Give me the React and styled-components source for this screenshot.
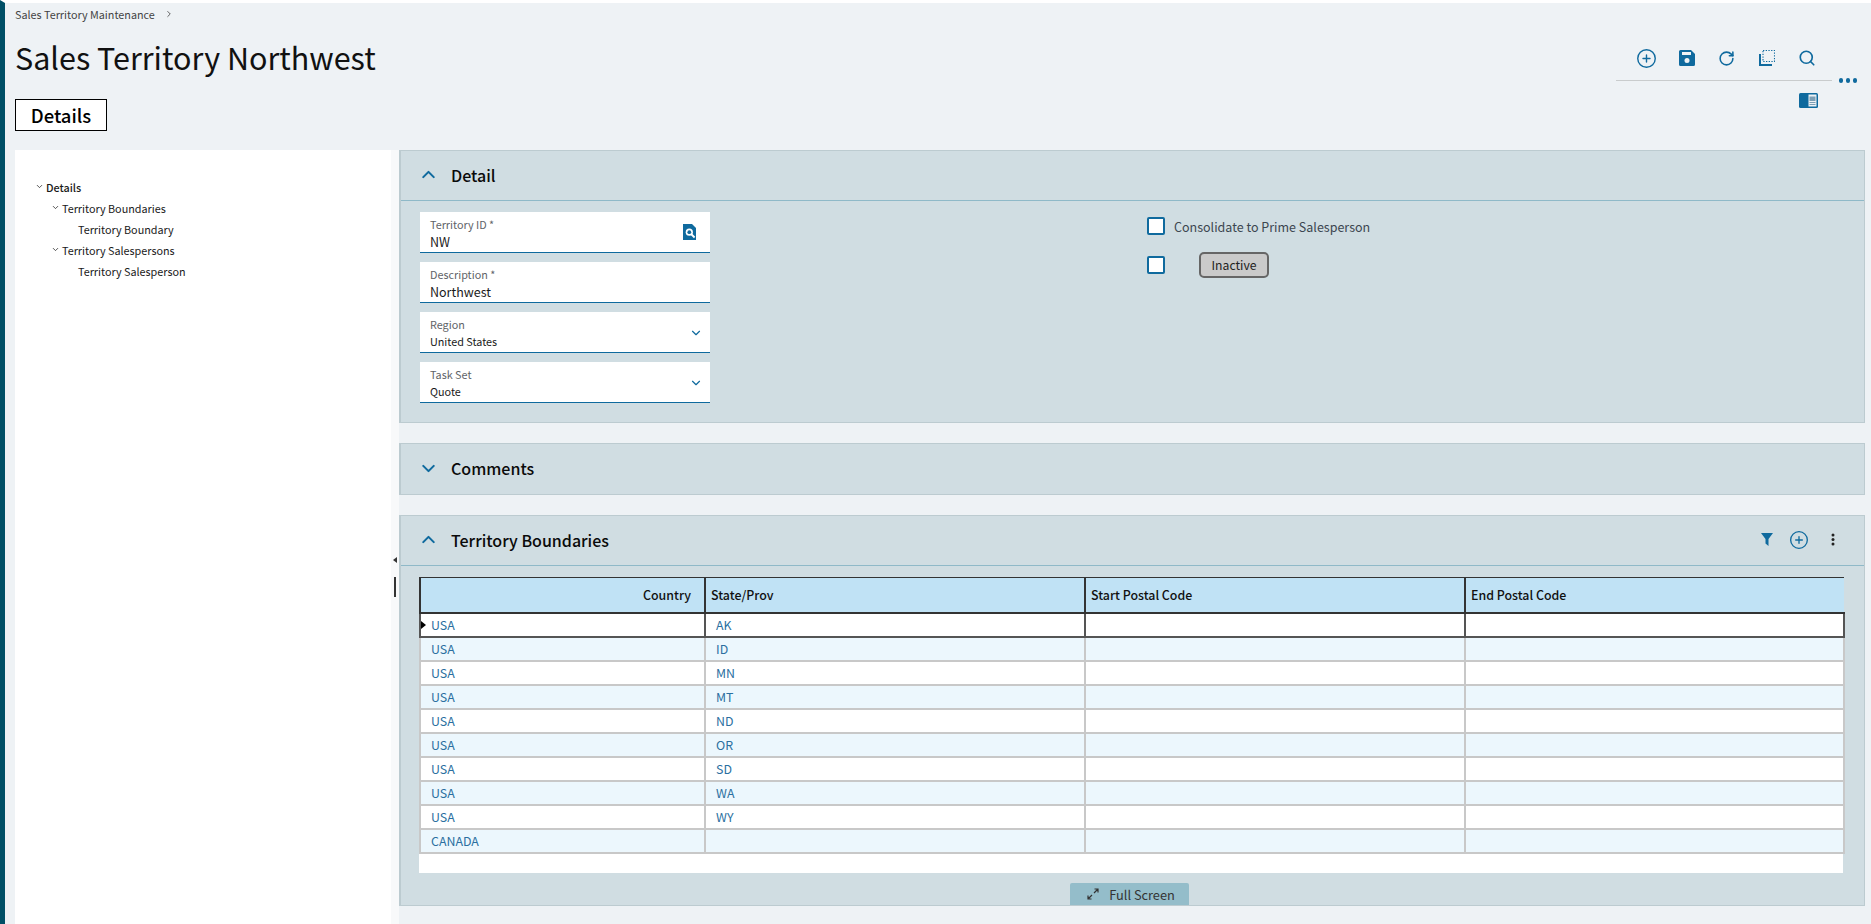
import React from "react";
import styled, { createGlobalStyle } from "styled-components";
import { ChevronDown, ChevronUp, ChevronRight, CirclePlus, RotateCw, Search } from "lucide-react";

const Global = createGlobalStyle`
  html, body { margin: 0; padding: 0; height: 100%; }
  body {
    background: #eef2f5;
    font-family: "Noto Sans CJK SC", "Open Sans", sans-serif;
    color: #000;
    overflow: hidden;
  }
`;

const BLUE = "#0f6a9e";

const Page = styled.div`
  width: 1871px;
  height: 924px;
  box-sizing: border-box;
  border-top: 3px solid #fff;
  border-left: 5px solid #004f66;
  display: flex;
  flex-direction: column;
  overflow: hidden;
`;
const Header = styled.header`
  height: 147px;
  flex: none;
  display: flex;
  justify-content: space-between;
  padding-left: 10px;
`;
const TitleBlock = styled.div`
  display: flex;
  flex-direction: column;
  align-items: flex-start;
`;
const Breadcrumb = styled.div`
  display: flex;
  align-items: center;
  gap: 9px;
  height: 22px;
  font-size: 10.8px;
  line-height: 22px;
  color: #444;
`;
const Title = styled.h1`
  margin: 10px 0 0;
  font-size: 30.5px;
  line-height: 44px;
  font-weight: 400;
  color: #111;
`;
const TabButton = styled.div`
  margin-top: 20px;
  width: 90px;
  height: 30px;
  border: 1px solid #000;
  background: #fff;
  font-size: 18.5px;
  font-weight: 500;
  line-height: 30px;
  text-align: center;
`;
const ActionsArea = styled.div`
  display: flex;
  align-items: flex-start;
  padding-top: 44px;
  padding-right: 14px;
`;
const ToolColumn = styled.div`
  display: flex;
  flex-direction: column;
  align-items: flex-end;
  width: 216px;
`;
const Toolbar = styled.div`
  width: 100%;
  height: 34px;
  box-sizing: border-box;
  border-bottom: 1px solid #c9cccd;
  display: flex;
  align-items: flex-start;
  justify-content: flex-end;
  gap: 18px;
  padding-right: 14px;
`;
const ToolIcon = styled.span`
  width: 22px;
  height: 22px;
  display: flex;
  align-items: center;
  justify-content: center;
  color: ${BLUE};
`;
const SideIcon = styled.span`
  display: flex;
  margin: 12px 14px 0 0;
`;
const MoreDots = styled.div`
  display: flex;
  gap: 2.5px;
  margin: 31px 0 0 7px;
  span {
    width: 4.5px;
    height: 4.5px;
    border-radius: 50%;
    background: ${BLUE};
  }
`;
const Body = styled.div`
  flex: 1;
  display: flex;
  padding-left: 10px;
  min-height: 0;
`;
const TreePanel = styled.nav`
  width: 376px;
  flex: none;
  background: #fff;
  padding-top: 26px;
  box-sizing: border-box;
`;
const TreeRow = styled.div`
  display: flex;
  align-items: center;
  height: 21px;
  padding-left: ${(p) => p.$indent}px;
  gap: 2px;
  font-size: 10.8px;
  font-weight: ${(p) => (p.$strong ? 500 : 400)};
  color: #1a1a1a;
  svg { color: #222; flex: none; }
`;
const Splitter = styled.div`
  width: 8px;
  flex: none;
  display: flex;
  flex-direction: column;
  align-items: center;
  padding-top: 407px;
  box-sizing: border-box;
  background: #f8f9fa;
`;
const SplitArrow = styled.span`
  width: 0;
  height: 0;
  border-top: 3px solid transparent;
  border-bottom: 3px solid transparent;
  border-right: 4px solid #333;
`;
const SplitBar = styled.span`
  width: 2px;
  height: 20px;
  margin-top: 14px;
  background: #333;
`;
const Main = styled.main`
  width: 1466px;
  flex: none;
  display: flex;
  flex-direction: column;
  gap: 20px;
`;
const Section = styled.section`
  background: #d0dde2;
  border: 1px solid #bccbd0;
  border-width: 1px 1px 1px 2px;
  box-sizing: border-box;
  height: ${(p) => p.$height}px;
  display: flex;
  flex-direction: column;
`;
const SectionHead = styled.div`
  height: 50px;
  flex: none;
  box-sizing: border-box;
  display: flex;
  align-items: center;
  padding: 0 29px 2px 17px;
  gap: 12px;
  font-size: 16px;
  font-weight: 500;
  color: #0a0a0a;
  border-bottom: ${(p) => (p.$open ? "1px solid #8fb9c8" : "none")};
  svg { color: ${BLUE}; flex: none; }
`;
const HeadActions = styled.div`
  margin-left: auto;
  display: flex;
  align-items: center;
  gap: 16px;
  svg:last-child { margin-left: 6px; }
`;
const DetailGrid = styled.div`
  display: flex;
  padding: 11px 0 0 19px;
`;
const FieldColumn = styled.div`
  width: 290px;
  display: flex;
  flex-direction: column;
  gap: 9px;
`;
const Field = styled.div`
  height: 41px;
  box-sizing: border-box;
  background: #fff;
  border-bottom: 1px solid ${BLUE};
  padding: 5px 10px 0;
  position: relative;
`;
const FieldLabel = styled.div`
  font-size: 10.8px;
  line-height: 15px;
  color: #5f6468;
`;
const FieldValue = styled.div`
  margin-top: 1px;
  font-size: ${(p) => (p.$small ? 10.8 : 12.5)}px;
  line-height: 17px;
  color: #1a1a1a;
`;
const FieldIcon = styled.span`
  position: absolute;
  right: ${(p) => (p.$chevron ? 7 : 14)}px;
  top: ${(p) => (p.$chevron ? 14 : 12)}px;
  display: flex;
  color: ${BLUE};
`;
const ChecksColumn = styled.div`
  margin-left: 437px;
  padding-top: 2px;
  display: flex;
  flex-direction: column;
  gap: 15px;
`;
const CheckRow = styled.div`
  display: flex;
  align-items: center;
  height: 24px;
  font-size: 12.5px;
  color: #3c4650;
`;
const CheckBox = styled.span`
  width: 18px;
  height: 18px;
  box-sizing: border-box;
  background: #fff;
  border: 2px solid ${BLUE};
  border-radius: 2px;
  margin-right: 9px;
`;
const InactiveBtn = styled.span`
  width: 70px;
  height: 26px;
  box-sizing: border-box;
  margin-left: 25px;
  background: #cacaca;
  border: 2px solid #666;
  border-radius: 5px;
  font-size: 12.2px;
  line-height: 22px;
  text-align: center;
  color: #222;
`;
const TableWrap = styled.div`
  margin: 11px 0 0 18px;
  width: 1424px;
  height: 298px;
  background: #fff;
  position: relative;
`;
const Grid = styled.table`
  width: 100%;
  table-layout: fixed;
  border-collapse: collapse;
  font-size: 12.4px;
`;
const HeadCell = styled.th`
  height: 34px;
  padding: 0 ${(p) => (p.$right ? 13 : 6)}px 0 5px;
  background: #c0e2f5;
  border: 1px solid #333;
  border-width: 1px 2px 2px;
  border-color: #333;
  border-right: ${(p) => (p.$last ? "none" : "2px solid #333")};
  font-weight: 500;
  font-size: 12.4px;
  text-align: ${(p) => (p.$right ? "right" : "left")};
  color: #111;
`;
const Row = styled.tr`
  background: ${(p) => (p.$odd ? "#ecf7fd" : "#fff")};
`;
const Cell = styled.td`
  height: 22px;
  padding: 0 0 0 10px;
  border: 2px solid ${(p) => (p.$active ? "#555" : "#c8c8c8")};
  color: #2b6fa0;
  position: relative;
`;
const RowMarker = styled.span`
  position: absolute;
  left: 0;
  top: 7px;
  width: 0;
  height: 0;
  border-top: 4px solid transparent;
  border-bottom: 4px solid transparent;
  border-left: 5px solid #000;
`;
const FullScreenBar = styled.div`
  margin-top: 10px;
  flex: 1;
  display: flex;
  justify-content: center;
  align-items: flex-end;
  padding-right: 6px;
`;
const FullScreenBtn = styled.div`
  width: 119px;
  height: 22px;
  padding-left: 3px;
  box-sizing: border-box;
  background: #94bdca;
  border-radius: 2px 2px 0 0;
  display: flex;
  align-items: center;
  justify-content: center;
  gap: 10px;
  font-size: 12.8px;
  color: #333;
`;

const SaveIcon = () => (
  <svg width="16" height="16" viewBox="0 0 16 16">
    <path d="M2 0h10l4 4v10.500a1.500 1.500 0 0 1-1.500 1.500h-13A1.500 1.500 0 0 1 0 14.500v-13A1.500 1.500 0 0 1 1.500 0z" fill={BLUE} />
    <rect x="3" y="2" width="9" height="3" fill="#eef2f5" />
    <circle cx="8" cy="10.500" r="2.500" fill="#eef2f5" />
  </svg>
);

const CopyDashIcon = () => (
  <svg width="16" height="16" viewBox="0 0 16 16" fill="none" stroke={BLUE}>
    <rect x="4" y="0.500" width="11.500" height="11" strokeWidth="1.100" strokeDasharray="1.300 1.400" />
    <path d="M1 4v11h12" strokeWidth="2" />
  </svg>
);

const PanelIcon = () => (
  <svg width="19" height="15" viewBox="0 0 19 15">
    <rect width="19" height="15" rx="1.500" fill={BLUE} />
    <rect x="9.500" y="1.500" width="8" height="12" fill="#eef2f5" />
    <rect x="10.500" y="3.500" width="6" height="4.500" fill="#7d9fb5" />
    <rect x="10.500" y="9" width="6" height="1" fill="#7d9fb5" />
    <rect x="10.500" y="11" width="6" height="1" fill="#7d9fb5" />
  </svg>
);

const LookupIcon = () => (
  <svg width="13" height="16" viewBox="0 0 13 16">
    <path d="M0 0h9l4 4v12H0z" fill={BLUE} />
    <circle cx="6.300" cy="8.200" r="3.600" fill="#fff" />
    <circle cx="6.300" cy="8.200" r="1.900" fill={BLUE} />
    <path d="M8.600 10.500l3 3" stroke="#fff" strokeWidth="1.800" />
  </svg>
);

const FilterIcon = () => (
  <svg width="12" height="13" viewBox="0 0 12 13">
    <path d="M0 0h12L7.500 6v7l-3-2.500V6z" fill={BLUE} />
  </svg>
);

const KebabIcon = () => (
  <svg width="4" height="13" viewBox="0 0 4 13">
    <circle cx="2" cy="2" r="1.500" fill="#222" />
    <circle cx="2" cy="6.500" r="1.500" fill="#222" />
    <circle cx="2" cy="11" r="1.500" fill="#222" />
  </svg>
);

const ExpandIcon = () => (
  <svg width="12" height="12" viewBox="0 0 12 12" fill="none" stroke="#333" strokeWidth="1.200">
    <path d="M7 5l4-4M7.500 1H11v3.500M5 7l-4 4M1 7.500V11h3.500" />
  </svg>
);

const rows = [
  ["USA", "AK"], ["USA", "ID"], ["USA", "MN"], ["USA", "MT"], ["USA", "ND"],
  ["USA", "OR"], ["USA", "SD"], ["USA", "WA"], ["USA", "WY"], ["CANADA", ""],
];

const App = () => (
  <Page>
    <Global />
    <Header>
      <TitleBlock>
        <Breadcrumb>
          Sales Territory Maintenance <ChevronRight size={10} />
        </Breadcrumb>
        <Title>Sales Territory Northwest</Title>
        <TabButton>Details</TabButton>
      </TitleBlock>
      <ActionsArea>
        <ToolColumn>
          <Toolbar>
            <ToolIcon><CirclePlus size={21} strokeWidth={1.6} /></ToolIcon>
            <ToolIcon><SaveIcon /></ToolIcon>
            <ToolIcon><RotateCw size={17} strokeWidth={2.2} /></ToolIcon>
            <ToolIcon><CopyDashIcon /></ToolIcon>
            <ToolIcon><Search size={18} strokeWidth={2.2} /></ToolIcon>
          </Toolbar>
          <SideIcon><PanelIcon /></SideIcon>
        </ToolColumn>
        <MoreDots><span /><span /><span /></MoreDots>
      </ActionsArea>
    </Header>
    <Body>
      <TreePanel>
        <TreeRow $indent={20} $strong><ChevronDown size={9} strokeWidth={2} />Details</TreeRow>
        <TreeRow $indent={36}><ChevronDown size={9} strokeWidth={2} />Territory Boundaries</TreeRow>
        <TreeRow $indent={63}>Territory Boundary</TreeRow>
        <TreeRow $indent={36}><ChevronDown size={9} strokeWidth={2} />Territory Salespersons</TreeRow>
        <TreeRow $indent={63}>Territory Salesperson</TreeRow>
      </TreePanel>
      <Splitter><SplitArrow /><SplitBar /></Splitter>
      <Main>
        <Section $height={273}>
          <SectionHead $open><ChevronUp size={21} strokeWidth={2.4} />Detail</SectionHead>
          <DetailGrid>
            <FieldColumn>
              <Field>
                <FieldLabel>Territory ID *</FieldLabel>
                <FieldValue>NW</FieldValue>
                <FieldIcon><LookupIcon /></FieldIcon>
              </Field>
              <Field>
                <FieldLabel>Description *</FieldLabel>
                <FieldValue>Northwest</FieldValue>
              </Field>
              <Field>
                <FieldLabel>Region</FieldLabel>
                <FieldValue $small>United States</FieldValue>
                <FieldIcon $chevron><ChevronDown size={14} strokeWidth={2} /></FieldIcon>
              </Field>
              <Field>
                <FieldLabel>Task Set</FieldLabel>
                <FieldValue $small>Quote</FieldValue>
                <FieldIcon $chevron><ChevronDown size={14} strokeWidth={2} /></FieldIcon>
              </Field>
            </FieldColumn>
            <ChecksColumn>
              <CheckRow><CheckBox />Consolidate to Prime Salesperson</CheckRow>
              <CheckRow><CheckBox /><InactiveBtn>Inactive</InactiveBtn></CheckRow>
            </ChecksColumn>
          </DetailGrid>
        </Section>
        <Section $height={52}>
          <SectionHead><ChevronDown size={21} strokeWidth={2.4} />Comments</SectionHead>
        </Section>
        <Section $height={391}>
          <SectionHead $open>
            <ChevronUp size={21} strokeWidth={2.4} />Territory Boundaries
            <HeadActions>
              <FilterIcon />
              <CirclePlus size={20} strokeWidth={1.6} />
              <KebabIcon />
            </HeadActions>
          </SectionHead>
          <TableWrap>
            <Grid>
              <colgroup>
                <col width="285" /><col width="380" /><col width="380" /><col width="379" />
              </colgroup>
              <thead>
                <tr>
                  <HeadCell $right>Country</HeadCell>
                  <HeadCell>State/Prov</HeadCell>
                  <HeadCell>Start Postal Code</HeadCell>
                  <HeadCell $last>End Postal Code</HeadCell>
                </tr>
              </thead>
              <tbody>
                {rows.map(([country, state], i) => (
                  <Row key={country + state} $odd={i % 2 === 1}>
                    <Cell $active={i === 0}>{i === 0 && <RowMarker />}{country}</Cell>
                    <Cell $active={i === 0}>{state}</Cell>
                    <Cell $active={i === 0} />
                    <Cell $active={i === 0} />
                  </Row>
                ))}
              </tbody>
            </Grid>
          </TableWrap>
          <FullScreenBar>
            <FullScreenBtn><ExpandIcon />Full Screen</FullScreenBtn>
          </FullScreenBar>
        </Section>
      </Main>
    </Body>
  </Page>
);

export default App;
